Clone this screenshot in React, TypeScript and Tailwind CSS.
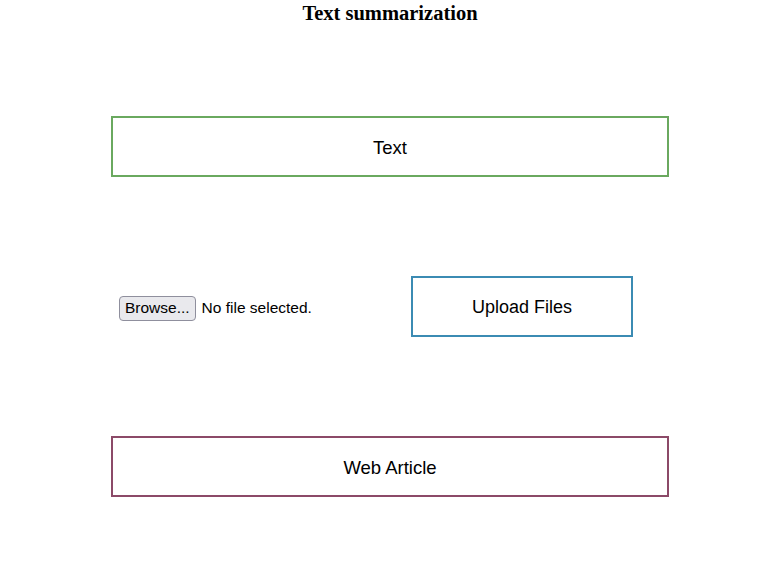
export default function App() {
  return (
    <div className="w-[776px] h-[573px] bg-white text-black flex flex-col" style={{ fontFamily: '"Liberation Sans", Arial, sans-serif' }}>
      <h1
        className="text-center text-[20.5px] font-bold leading-[24px] pt-[1px] pl-[4px] h-[24px]"
        style={{ fontFamily: '"Liberation Serif", "Times New Roman", serif' }}
      >
        Text summarization
      </h1>

      <button className="ml-[111px] mt-[92px] w-[558px] h-[61px] pt-[2px] border-2 border-[#6aa95f] bg-white text-[18.5px] flex items-center justify-center">
        Text
      </button>

      <div className="mt-[99px] h-[61px] flex items-center">
        <div className="ml-[119px] mt-[3px] flex items-center w-[292px]">
          <span className="h-[25px] px-[5px] flex items-center bg-[#e9e9ed] border border-[#8f8f9d] rounded-[4px] text-[15.5px] leading-none">
            Browse...
          </span>
          <span className="ml-[6px] text-[15.5px]">No file selected.</span>
        </div>
        <button className="w-[222px] h-[61px] pt-[2px] border-2 border-[#3b8bb3] bg-white text-[18px] flex items-center justify-center">
          Upload Files
        </button>
      </div>

      <button className="ml-[111px] mt-[99px] w-[558px] h-[61px] pt-[2px] border-2 border-[#8c4a68] bg-white text-[18.5px] flex items-center justify-center">
        Web Article
      </button>
    </div>
  );
}
